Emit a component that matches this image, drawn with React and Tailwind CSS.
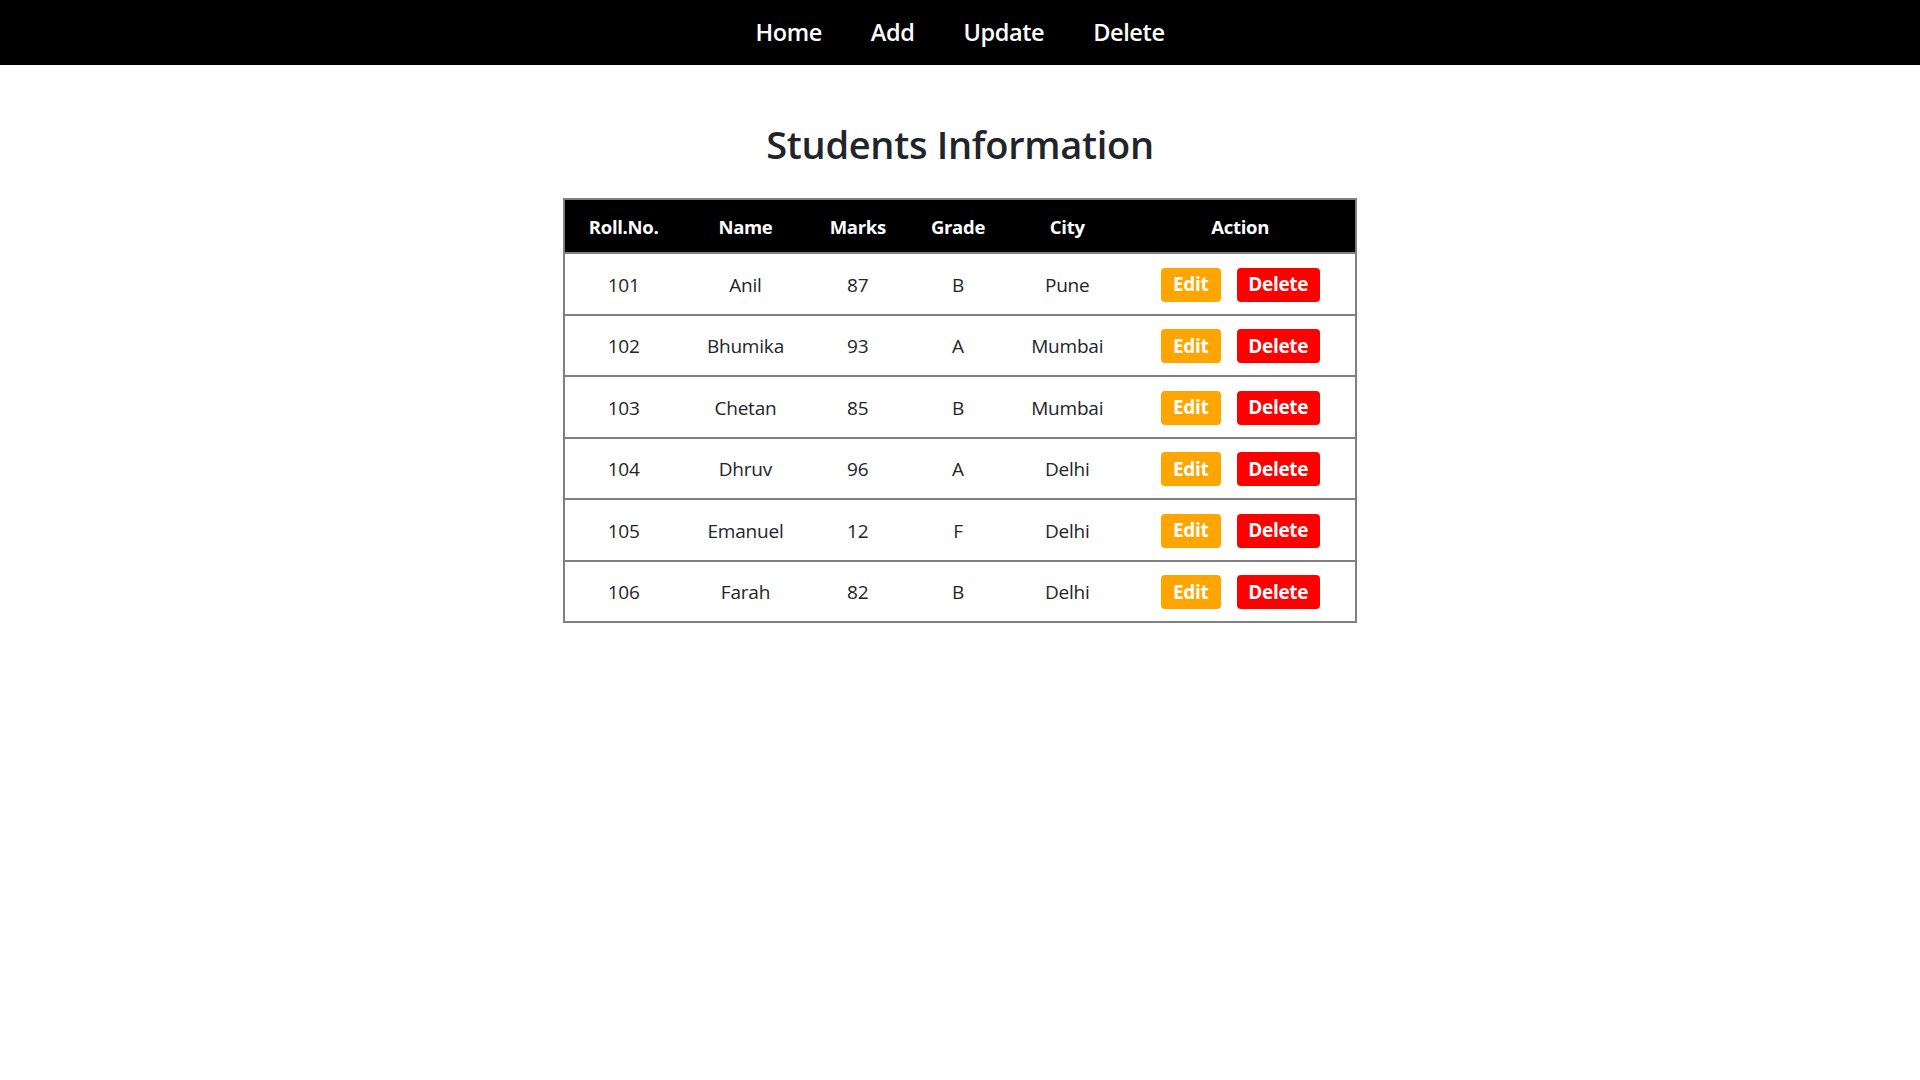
import React from "react";

const rows = [
  ["101", "Anil", "87", "B", "Pune"],
  ["102", "Bhumika", "93", "A", "Mumbai"],
  ["103", "Chetan", "85", "B", "Mumbai"],
  ["104", "Dhruv", "96", "A", "Delhi"],
  ["105", "Emanuel", "12", "F", "Delhi"],
  ["106", "Farah", "82", "B", "Delhi"],
];

export default function App() {
  return (
    <div className="min-h-screen bg-white text-[#212529]" style={{ fontFamily: '"Open Sans", "Noto Sans", sans-serif' }}>
      <nav className="h-[65px] bg-black flex items-center justify-center gap-[49px]">
        {["Home", "Add", "Update", "Delete"].map((t) => (
          <a key={t} className="text-white text-[23.5px] font-semibold tracking-[-0.4px] leading-none cursor-pointer">
            {t}
          </a>
        ))}
      </nav>
      <h1 className="mt-[55px] text-center text-[38px] font-semibold leading-[48px] tracking-[-0.3px] text-[#212529]">
        Students Information
      </h1>
      <div className="flex justify-center mt-[30px]">
        <table className="border-collapse border-2 border-[#808080] w-[794px] table-fixed text-[19px]">
          <colgroup>
            <col className="w-[118px]" />
            <col className="w-[126px]" />
            <col className="w-[98px]" />
            <col className="w-[102px]" />
            <col className="w-[116px]" />
            <col className="w-[230px]" />
          </colgroup>
          <thead>
            <tr className="bg-black text-white h-[54px]">
              {["Roll.No.", "Name", "Marks", "Grade", "City", "Action"].map((h) => (
                <th key={h} className="font-bold text-[18.5px] text-center tracking-[-0.3px] border-b-2 border-[#808080] pt-[2px]">
                  {h}
                </th>
              ))}
            </tr>
          </thead>
          <tbody>
            {rows.map((r) => (
              <tr key={r[0]} className="h-[61.5px] border-b-2 border-[#808080]">
                {r.map((c, i) => (
                  <td key={i} className="text-center text-[#212529] tracking-[-0.2px] pt-[2px]">
                    {c}
                  </td>
                ))}
                <td className="text-center pt-[2px]">
                  <div className="flex justify-center gap-[16px]">
                    <button className="w-[60px] h-[34px] rounded bg-[#FFA500] text-white text-[19px] font-bold tracking-[-0.3px] leading-none">
                      Edit
                    </button>
                    <button className="w-[83px] h-[34px] rounded bg-[#FF0000] text-white text-[19px] font-bold tracking-[-0.3px] leading-none">
                      Delete
                    </button>
                  </div>
                </td>
              </tr>
            ))}
          </tbody>
        </table>
      </div>
    </div>
  );
}
